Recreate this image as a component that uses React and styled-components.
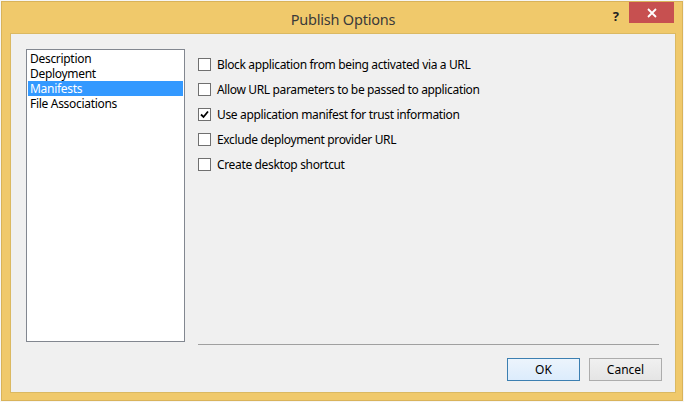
import React from "react";
import styled, { createGlobalStyle } from "styled-components";

const Global = createGlobalStyle`
  html, body { margin: 0; padding: 0; background: #f4f4f4; }
  * { box-sizing: border-box; }
`;

const font = `"Noto Sans", "Open Sans", sans-serif`;

const Screen = styled.div`
  width: 684px;
  height: 402px;
  padding: 1px;
  background: #f6f6f6;
`;

const Frame = styled.div`
  width: 100%;
  height: 100%;
  border: 1px solid #d9b35a;
  background: #f0c96b;
  display: flex;
  flex-direction: column;
  padding: 0 6px 7px 8px;
`;

const TitleBar = styled.div`
  height: 31px;
  flex: none;
  display: flex;
  align-items: flex-start;
  position: relative;
`;

const Title = styled.div`
  position: absolute;
  left: 0;
  right: 0;
  top: 7px;
  text-align: center;
  font-family: ${font};
  font-size: 14.5px;
  letter-spacing: -0.2px;
  color: #3a3a3a;
`;

const TitleControls = styled.div`
  margin-left: auto;
  display: flex;
  align-items: flex-start;
  gap: 10px;
  position: relative;
  margin-right: 2px;
`;

const Help = styled.span`
  font-family: ${font};
  font-weight: 700;
  font-size: 13px;
  color: #222;
  margin-top: 5px;
`;

const Close = styled.div`
  width: 45px;
  height: 21px;
  background: #c75050;
  display: flex;
  align-items: center;
  justify-content: center;
`;

const Client = styled.div`
  flex: 1;
  border: 1px solid #dbb962;
  background: #f0f0f0;
  padding: 15px 13px 11px 15px;
  display: flex;
  flex-direction: column;
`;

const Main = styled.div`
  display: flex;
  height: 296px;
  flex: none;
`;

const List = styled.div`
  width: 159px;
  height: 293px;
  border: 1px solid #828790;
  background: #fff;
  padding: 1px;
  font-family: ${font};
  font-size: 12px;
  letter-spacing: -0.3px;
`;

const Item = styled.div`
  height: 15px;
  line-height: 15px;
  padding-left: 2px;
  color: ${(p) => (p.$selected ? "#fff" : "#000")};
  background: ${(p) => (p.$selected ? "#3399ff" : "transparent")};
  white-space: nowrap;
`;

const Options = styled.div`
  flex: 1;
  margin-left: 13px;
  margin-right: 3px;
  display: flex;
  flex-direction: column;
  padding-top: 3px;
`;

const OptionRow = styled.label`
  display: flex;
  align-items: center;
  height: 25px;
  gap: 6px;
  font-family: ${font};
  font-size: 12px;
  letter-spacing: -0.35px;
  color: #000;
  white-space: nowrap;
`;

const Box = styled.span`
  width: 13px;
  height: 13px;
  border: 1px solid #707070;
  background: #fff;
  display: flex;
  align-items: center;
  justify-content: center;
  flex: none;
`;

const Separator = styled.div`
  margin-top: auto;
  height: 1px;
  background: #a0a0a0;
`;

const Footer = styled.div`
  display: flex;
  justify-content: flex-end;
  gap: 9px;
  margin-top: 13px;
`;

const Button = styled.div`
  width: 73px;
  height: 23px;
  border: 1px solid ${(p) => (p.$default ? "#3c7fb1" : "#acacac")};
  background: ${(p) =>
    p.$default
      ? "linear-gradient(#ecf4fc, #dcecfc)"
      : "linear-gradient(#f0f0f0, #e5e5e5)"};
  display: flex;
  align-items: center;
  justify-content: center;
  font-family: ${font};
  font-size: 12px;
  color: #000;
`;

const options = [
  { label: "Block application from being activated via a URL", checked: false },
  { label: "Allow URL parameters to be passed to application", checked: false },
  { label: "Use application manifest for trust information", checked: true },
  { label: "Exclude deployment provider URL", checked: false },
  { label: "Create desktop shortcut", checked: false },
];

const items = ["Description", "Deployment", "Manifests", "File Associations"];

export default function App() {
  return (
    <>
      <Global />
      <Screen>
        <Frame>
          <TitleBar>
            <Title>Publish Options</Title>
            <TitleControls>
              <Help>?</Help>
              <Close>
                <svg width="10" height="10" viewBox="0 0 10 10">
                  <path d="M1 1 L9 9 M9 1 L1 9" stroke="#fff" strokeWidth="1.8" />
                </svg>
              </Close>
            </TitleControls>
          </TitleBar>
          <Client>
            <Main>
              <List>
                {items.map((it) => (
                  <Item key={it} $selected={it === "Manifests"}>
                    {it}
                  </Item>
                ))}
              </List>
              <Options>
                {options.map((o) => (
                  <OptionRow key={o.label}>
                    <Box>
                      {o.checked && (
                        <svg width="9" height="9" viewBox="0 0 9 9">
                          <path d="M1 4.5 L3.5 7 L8 1.5" fill="none" stroke="#000" strokeWidth="1.8" />
                        </svg>
                      )}
                    </Box>
                    {o.label}
                  </OptionRow>
                ))}
                <Separator />
              </Options>
            </Main>
            <Footer>
              <Button $default>OK</Button>
              <Button>Cancel</Button>
            </Footer>
          </Client>
        </Frame>
      </Screen>
    </>
  );
}
